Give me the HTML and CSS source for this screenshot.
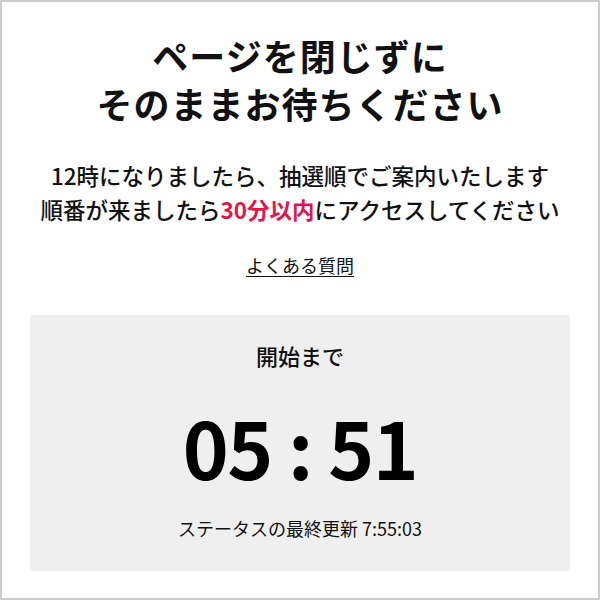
FILE: index.html
```html
<!DOCTYPE html>
<html lang="ja">
<head>
<meta charset="utf-8">
<link rel="stylesheet" href="styles.css">
</head>
<body>
<div class="frame">
  <h1 class="title">ページを閉じずに<br>そのままお待ちください</h1>
  <p class="lead">12時になりましたら、抽選順でご案内いたします<br>順番が来ましたら<span class="em">30分以内</span>にアクセスしてください</p>
  <p class="faq"><a href="#">よくある質問</a></p>
  <section class="countdown">
    <div class="label">開始まで</div>
    <div class="time">05 : 51</div>
    <div class="updated">ステータスの最終更新 7:55:03</div>
  </section>
</div>
</body>
</html>
```

FILE: styles.css
```css
html, body {
  margin: 0;
  padding: 0;
  background: #fff;
}
.frame {
  box-sizing: border-box;
  width: 600px;
  height: 600px;
  border: 2px solid #cccccc;
  padding: 29px 28px 0;
  font-family: "Noto Sans CJK JP", "Noto Sans", sans-serif;
  color: #111;
  text-align: center;
}
.title {
  margin: 0;
  font-size: 36px;
  line-height: 48px;
  font-weight: 700;
  letter-spacing: 1px;
}
.lead {
  margin: 31px 0 0;
  font-size: 22.5px;
  line-height: 34px;
  font-weight: 500;
}
.em {
  color: #e0174d;
  font-weight: 700;
}
.faq {
  margin: 26px 0 0;
  font-size: 18px;
  line-height: 26px;
}
.faq a {
  color: #111;
  text-decoration: underline;
  text-underline-offset: 3px;
}
.countdown {
  margin-top: 37px;
  background: #efefef;
  height: 256px;
  box-sizing: border-box;
  padding-top: 25px;
  display: flex;
  flex-direction: column;
  align-items: center;
}
.label {
  font-size: 22px;
  line-height: 30px;
  font-weight: 500;
}
.time {
  margin-top: 31px;
  font-size: 78px;
  line-height: 90px;
  font-weight: 700;
  letter-spacing: -1.5px;
  color: #000;
}
.updated {
  margin-top: 25px;
  font-size: 18px;
  line-height: 24px;
}
```
